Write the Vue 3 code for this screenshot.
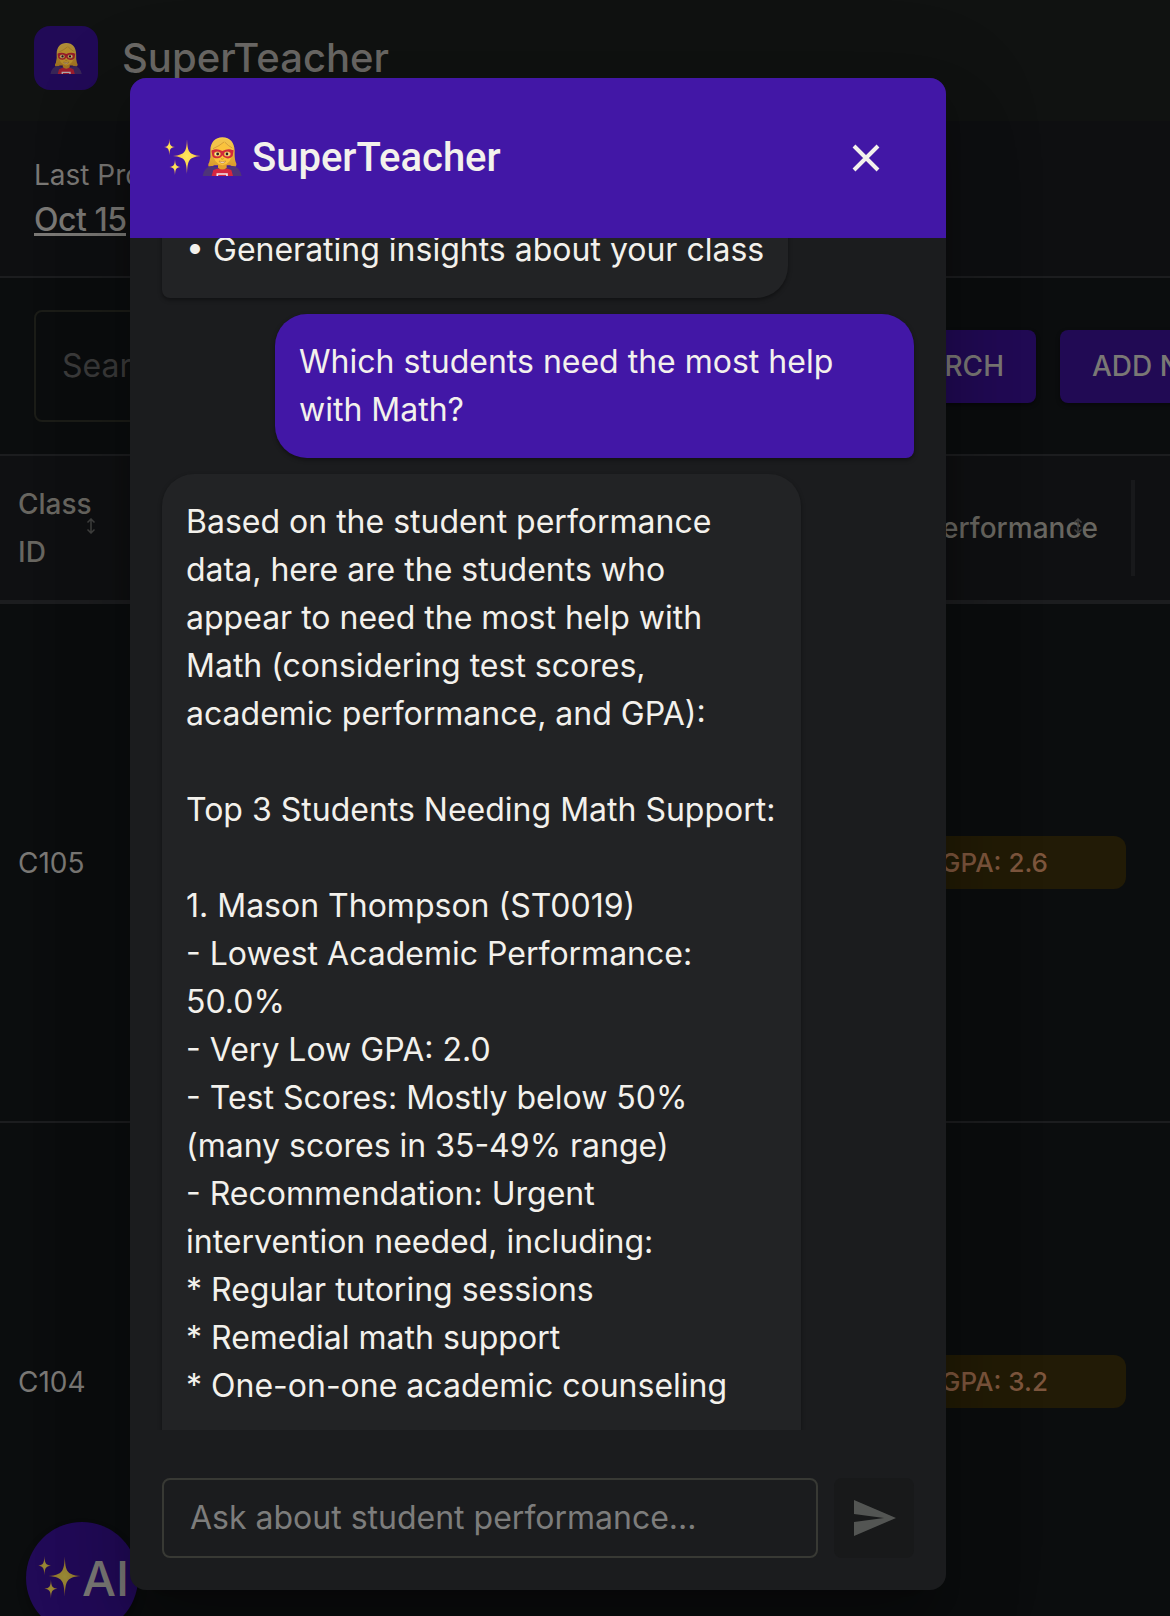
<script setup>
const answer = `Based on the student performance
data, here are the students who
appear to need the most help with
Math (considering test scores,
academic performance, and GPA):

Top 3 Students Needing Math Support:

1. Mason Thompson (ST0019)
- Lowest Academic Performance:
50.0%
- Very Low GPA: 2.0
- Test Scores: Mostly below 50%
(many scores in 35-49% range)
- Recommendation: Urgent
intervention needed, including:
* Regular tutoring sessions
* Remedial math support
* One-on-one academic counseling
`

const rows = [
  { id: 'C105', gpa: 'GPA: 2.6' },
  { id: 'C104', gpa: 'GPA: 3.2' },
]
</script>

<template>
  <div class="app">
    <svg class="defs" aria-hidden="true">
      <defs>
        <radialGradient id="gold">
          <stop offset="0" stop-color="#ffe85c" />
          <stop offset="0.45" stop-color="#fbd651" />
          <stop offset="1" stop-color="#e59a3c" />
        </radialGradient>
        <linearGradient id="hair" x1="0" y1="0" x2="0" y2="1">
          <stop offset="0" stop-color="#f8cf4e" />
          <stop offset="1" stop-color="#d99a2b" />
        </linearGradient>
        <symbol id="sparkles" viewBox="0 0 120 120">
          <g fill="url(#gold)">
            <path d="M75 9C77 48 80 56 116 60C80 64 77 72 75 114C73 72 70 64 33 60C70 56 73 48 75 9Z" />
            <path d="M22 8C23 27 25 31 39 33C25 35 23 39 22 58C21 39 19 35 6 33C19 31 21 27 22 8Z" />
            <path d="M39 69C40 87 42 91 56 93C42 95 40 99 39 118C38 99 36 95 22 93C36 91 38 87 39 69Z" />
          </g>
        </symbol>
        <symbol id="hero" viewBox="0 0 120 120">
          <path fill="url(#hair)" d="M61 4C85 4 97 21 98 44Q97 66 101 78Q106 85 102 91Q94 93 84 88H37Q28 93 19 91Q17 85 22 78Q27 62 25 44C25 19 40 4 61 4Z" />
          <path fill="#4e3479" d="M2 120Q7 92 30 90Q60 98 91 90Q113 92 119 120Z" />
          <path fill="#d6263f" d="M29 120L34 102Q47 96 61 97Q77 96 88 102L93 120Z" />
          <path fill="#e2a02e" d="M48 80H74V95Q61 106 48 95Z" />
          <path fill="#fbc33c" d="M33 46Q35 20 62 20Q89 21 90 47Q90 83 61 88Q33 83 33 46Z" />
          <path fill="#d12a3b" d="M28 43Q44 36 61 45Q78 36 95 43L92 60Q86 69 74 67Q65 66 61 58Q57 67 46 67Q34 67 31 59Z" />
          <ellipse cx="46" cy="54" rx="10" ry="7.5" fill="#f2b93f" />
          <ellipse cx="76" cy="54" rx="10" ry="7.5" fill="#f2b93f" />
          <ellipse cx="46" cy="54" rx="7" ry="5" fill="#fff0d0" />
          <ellipse cx="76" cy="54" rx="7" ry="5" fill="#fff0d0" />
          <circle cx="47" cy="54" r="4.3" fill="#342019" />
          <circle cx="75" cy="54" r="4.3" fill="#342019" />
          <path d="M51 75Q61 80 71 75Q68 82 61 82Q54 82 51 75Z" fill="#fff3dc" stroke="#a86422" stroke-width="1.5" />
          <path d="M57 68Q61 71 65 68" fill="none" stroke="#b97920" stroke-width="2" />
          <path fill="#f3c34b" d="M27 44Q28 14 61 7Q90 8 94 43Q77 37 67 18Q53 33 27 44Z" />
          <path d="M66 18Q52 30 33 38M68 18Q79 30 91 36" fill="none" stroke="#c98b29" stroke-width="2" />
          <path d="M46 120V114H75V120" fill="none" stroke="#f3e8ea" stroke-width="5" />
        </symbol>
      </defs>
    </svg>

    <header class="topbar">
      <div class="logo"><svg><use href="#hero" /></svg></div>
      <h1>SuperTeacher</h1>
    </header>

    <section class="processed">
      <span class="label">Last Processed</span>
      <span class="date">Oct 15</span>
    </section>

    <section class="toolbar">
      <div class="search">Search</div>
      <div class="buttons">
        <div class="btn first">SEARCH</div>
        <div class="btn second">ADD NEW</div>
      </div>
    </section>

    <div class="thead">
      <div class="th-class">
        <span>Class<br />ID</span>
        <svg class="sort" viewBox="0 0 10 16"><path d="M5 1.5V14.5M1.5 4.5L5 1L8.5 4.5M1.5 11.5L5 15L8.5 11.5" /></svg>
      </div>
      <div class="th-perf">
        <span>Performance</span>
        <svg class="sort" viewBox="0 0 10 16"><path d="M5 1.5V14.5M1.5 4.5L5 1L8.5 4.5M1.5 11.5L5 15L8.5 11.5" /></svg>
      </div>
      <i class="resizer"></i>
    </div>

    <div v-for="row in rows" :key="row.id" class="row">
      <span>{{ row.id }}</span>
      <span class="pill">{{ row.gpa }}</span>
    </div>

    <div class="fab"><svg><use href="#sparkles" /></svg><span>AI</span></div>

    <main class="dialog">
      <div class="dialog-head">
        <svg class="emoji"><use href="#sparkles" /></svg>
        <svg class="emoji"><use href="#hero" /></svg>
        <h2>SuperTeacher</h2>
        <svg class="close" viewBox="0 0 28 28"><path d="M2 2L26 26M26 2L2 26" /></svg>
      </div>
      <div class="messages">
        <div class="bubble bot intro">• Generating insights about your class</div>
        <div class="bubble user">Which students need the most help<br />with Math?</div>
        <div class="bubble bot answer">{{ answer }}</div>
      </div>
      <div class="composer">
        <div class="ask">Ask about student performance...</div>
        <div class="send">
          <svg viewBox="0 0 42 36"><path d="M0 0L42 18L0 36V22L30 18L0 14Z" /></svg>
        </div>
      </div>
    </main>
  </div>
</template>

<style>
body {
  margin: 0;
  background: #0b0d0e;
}
</style>

<style scoped>
.app {
  position: relative;
  width: 1170px;
  height: 1616px;
  overflow: hidden;
  background: #0b0d0e;
  color: #7a7875;
  font-family: Inter, sans-serif;
  box-sizing: border-box;
}
.app * {
  box-sizing: border-box;
}
.defs {
  position: absolute;
  width: 0;
  height: 0;
}
.topbar {
  height: 121px;
  padding: 26px 34px;
  display: flex;
  gap: 24px;
  background: #101211;
}
.logo {
  width: 64px;
  height: 64px;
  border-radius: 16px;
  background: #210a57;
  display: flex;
  align-items: center;
  justify-content: center;
}
.logo svg {
  width: 32px;
  height: 32px;
  filter: brightness(0.72);
}
h1, h2 {
  margin: 0;
  font-weight: 500;
  white-space: nowrap;
}
h1 {
  font-size: 40px;
  line-height: 64px;
  color: #6b6966;
}
.processed {
  height: 157px;
  padding: 31px 34px 0;
  display: flex;
  flex-direction: column;
  align-items: flex-start;
  background: #0e0f11;
  border-bottom: 2px solid #1c1d1f;
}
.label {
  font-size: 28px;
  line-height: 47px;
}
.date {
  height: 37px;
  font-size: 32px;
  line-height: 42px;
  font-weight: 500;
  letter-spacing: -0.5px;
  border-bottom: 3px solid #7a7875;
}
.toolbar {
  height: 178px;
  padding: 0 0 0 34px;
  display: flex;
  align-items: center;
  border-bottom: 2px solid #1c1d1f;
}
.search {
  width: 600px;
  height: 112px;
  flex: none;
  padding-left: 26px;
  border: 2px solid #1c1d18;
  border-radius: 8px;
  font-size: 32px;
  line-height: 108px;
  color: #3b3b3b;
}
.buttons {
  flex: none;
  margin-left: 226px;
  display: flex;
  gap: 24px;
}
.btn {
  height: 73px;
  flex: none;
  border-radius: 8px;
  background: #210a54;
  box-shadow: 0 2px 4px rgba(0, 0, 0, 0.4);
  font-size: 28px;
  line-height: 73px;
  font-weight: 500;
  white-space: nowrap;
}
.first {
  width: 176px;
  padding-right: 32px;
  text-align: right;
}
.second {
  width: 240px;
  padding-left: 32px;
}
.thead {
  height: 148px;
  padding-left: 18px;
  display: flex;
  align-items: center;
  background: #0f1012;
  border-bottom: 4px solid #1c1d1f;
  color: #686660;
  font-size: 28px;
  line-height: 48px;
  font-weight: 500;
}
.th-class {
  width: 90px;
  display: flex;
  align-items: center;
}
.sort {
  width: 10px;
  height: 16px;
  margin: -4px 0 0 -6px;
  fill: none;
  stroke: #414140;
  stroke-width: 1.5;
}
.th-perf {
  width: 260px;
  margin-left: 730px;
  display: flex;
  align-items: center;
  justify-content: flex-end;
}
.th-perf .sort {
  margin: -4px 15px 0 -25px;
}
.resizer {
  width: 4px;
  height: 96px;
  margin-left: 33px;
  background: #18191b;
}
.row {
  height: 519px;
  padding: 0 44px 0 18px;
  display: flex;
  align-items: center;
  justify-content: space-between;
  border-bottom: 2px solid #1c1d1f;
  font-size: 28px;
}
.pill {
  width: 240px;
  height: 53px;
  padding-right: 78px;
  border-radius: 12px;
  background: #221b06;
  color: #7d563d;
  font-size: 26px;
  font-weight: 500;
  line-height: 53px;
  text-align: right;
}
.fab {
  position: absolute;
  left: 26px;
  top: 1522px;
  width: 112px;
  height: 112px;
  border-radius: 50%;
  background: #210a57;
  display: flex;
  align-items: center;
  padding-left: 10px;
  font-size: 48px;
  font-weight: 500;
  box-shadow: 0 6px 10px rgba(0, 0, 0, 0.3);
}
.fab svg {
  width: 46px;
  height: 46px;
  flex: none;
  margin-top: -4px;
  filter: brightness(0.6);
}
.dialog {
  position: absolute;
  left: 130px;
  top: 78px;
  width: 816px;
  height: 1512px;
  border-radius: 16px;
  overflow: hidden;
  display: flex;
  flex-direction: column;
  background: #1b1c1e;
  color: #f3f1ec;
  box-shadow: 0 22px 30px -14px rgba(0, 0, 0, 0.2), 0 48px 76px 6px rgba(0, 0, 0, 0.14), 0 18px 92px 16px rgba(0, 0, 0, 0.12);
}
.dialog-head {
  height: 160px;
  flex: none;
  padding: 0 66px 0 32px;
  display: flex;
  align-items: center;
  background: #4217a6;
}
.emoji {
  width: 40px;
  height: 40px;
  margin-top: -4px;
}
h2 {
  margin: -2px 0 0 10px;
  font-family: Roboto, sans-serif;
  font-size: 40px;
}
.close {
  width: 28px;
  height: 28px;
  margin-left: auto;
  fill: none;
  stroke: #f3f1ec;
  stroke-width: 4;
}
.messages {
  height: 1192px;
  flex: none;
  padding: 0 32px;
  overflow: hidden;
  display: flex;
  flex-direction: column;
  gap: 16px;
}
.bubble {
  flex: none;
  padding: 24px;
  font-size: 32px;
  line-height: 48px;
  box-shadow: 0 2px 4px rgba(0, 0, 0, 0.4);
  white-space: pre;
}
.bot {
  align-self: flex-start;
  border-radius: 32px 32px 32px 8px;
  background: #222325;
}
.intro {
  margin-top: -36px;
}
.user {
  width: 639px;
  align-self: flex-end;
  border-radius: 32px 32px 8px 32px;
  background: #4217a6;
}
.answer {
  width: 639px;
  padding-bottom: 96px;
}
.composer {
  padding: 48px 32px 32px;
  display: flex;
  gap: 16px;
}
.ask {
  width: 656px;
  height: 80px;
  padding-left: 26px;
  border: 2px solid #383934;
  border-radius: 8px;
  color: #7d7d7c;
  font-size: 32px;
  line-height: 76px;
}
.send {
  width: 80px;
  height: 80px;
  padding-left: 20px;
  border-radius: 8px;
  background: #18191a;
  display: flex;
  align-items: center;
}
.send svg {
  width: 42px;
  height: 36px;
  fill: #535553;
}
</style>
